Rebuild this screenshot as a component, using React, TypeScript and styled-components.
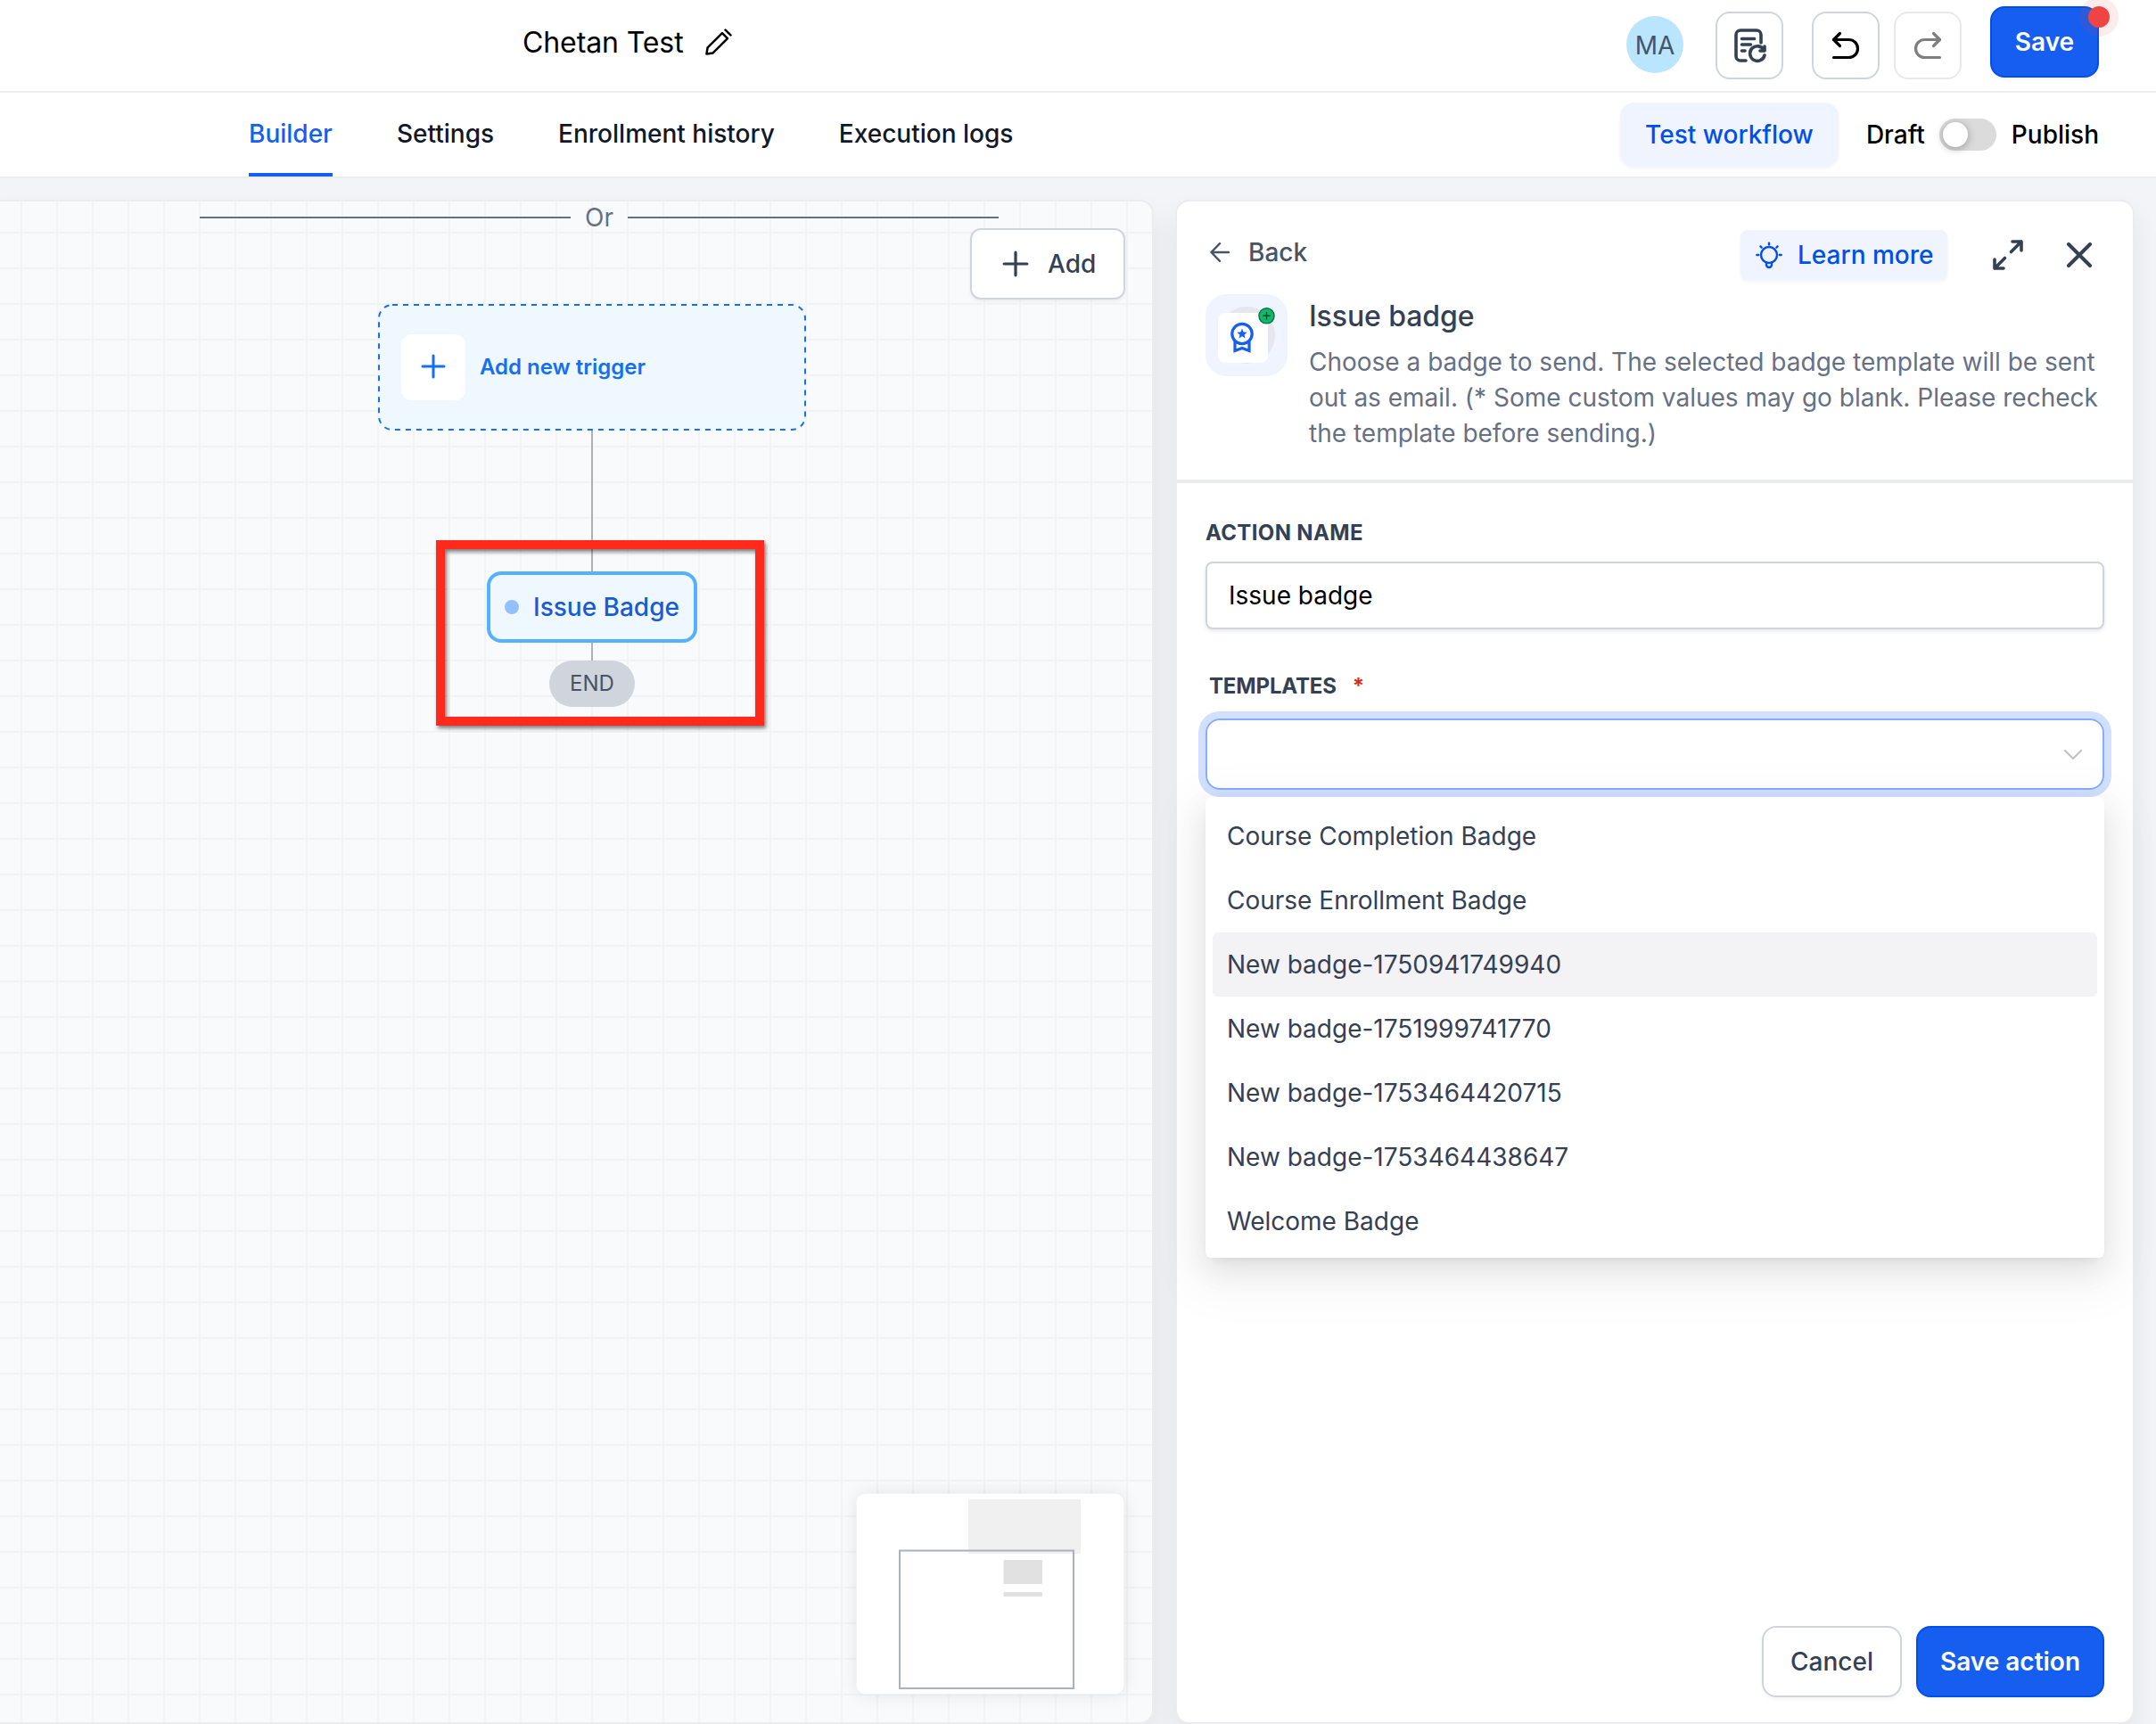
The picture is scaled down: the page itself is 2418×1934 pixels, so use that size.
import { FunctionComponent, ReactNode } from 'react';
import { createGlobalStyle, css, styled } from 'styled-components';

const color = {
  primary: '#155eef',
  primaryDark: '#004eeb',
  primarySoft: '#eff4ff',
  gray900: '#101828',
  gray700: '#344054',
  gray600: '#475467',
  gray500: '#667085',
  gray300: '#d0d5dd',
  gray200: '#eaecf0',
  gray100: '#f2f4f7',
  canvas: '#f9fafc',
  skyBg: '#eff8ff',
};

const GlobalStyle = createGlobalStyle`
  * {
    box-sizing: border-box;
  }
  body {
    margin: 0;
    background: ${color.gray100};
    font-family: Inter, "Liberation Sans", sans-serif;
    font-size: 28px;
    color: #000;
  }
  button, input {
    font: inherit;
    color: inherit;
    margin: 0;
  }
  svg {
    display: block;
    flex: none;
  }
`;

const Page = styled.div`
  display: flex;
  flex-direction: column;
  width: 2418px;
  height: 1934px;
  overflow: hidden;
`;

/* Header */
const Header = styled.header`
  display: flex;
  align-items: flex-start;
  flex: none;
  height: 104px;
  padding: 0 64px 0 586px;
  background: #fff;
  border-bottom: 2px solid ${color.gray200};
`;
const WorkflowName = styled.h1`
  display: flex;
  align-items: center;
  gap: 23px;
  height: 94px;
  margin: 0 auto 0 0;
  font-size: 32px;
  font-weight: 400;
  letter-spacing: -0.1px;
`;
const Avatar = styled.div`
  width: 64px;
  height: 64px;
  margin: 18px 36px 0 0;
  border-radius: 50%;
  background: #b9e6fe;
  color: ${color.gray600};
  line-height: 66px;
  text-align: center;
`;
const IconButton = styled.button<{
  $gap: number;
  $muted?: boolean;
  $tint?: string;
}>`
  display: flex;
  align-items: center;
  justify-content: center;
  width: 76px;
  height: 76px;
  padding: 0;
  margin: 13px ${({ $gap }) => $gap}px 0 0;
  background: #fff;
  border: 2px solid ${color.gray300};
  border-radius: 16px;
  color: ${({ $tint = '#000' }) => $tint};
  opacity: ${({ $muted }) => ($muted ? 0.5 : 1)};
`;
const SaveWrap = styled.div`
  position: relative;
  margin-top: 7px;
`;
const UnsavedDot = styled.span`
  position: absolute;
  top: 0;
  right: -12px;
  width: 24px;
  height: 24px;
  border-radius: 50%;
  background: #ef4444;
  box-shadow: 0 0 0 10px rgba(239, 68, 68, 0.1);
`;

const Button = styled.button<{ $primary?: boolean; $width: number }>`
  width: ${({ $width }) => $width}px;
  height: 80px;
  padding: 0;
  border-radius: 16px;
  font-weight: 500;
  box-shadow: 0 2px 4px rgba(16, 24, 40, 0.05);
  ${({ $primary }) =>
    $primary
      ? css`
          background: ${color.primary};
          border: 2px solid ${color.primaryDark};
          color: #fff;
          font-weight: 600;
        `
      : css`
          background: #fff;
          border: 2px solid ${color.gray300};
          color: ${color.gray700};
        `}
`;

/* Tabs */
const TabBar = styled.nav`
  display: flex;
  flex: none;
  gap: 72px;
  height: 96px;
  padding: 0 64px 0 279px;
  background: #fff;
  border-bottom: 2px solid ${color.gray200};
`;
const Tab = styled.a<{ $active?: boolean }>`
  height: 94px;
  padding-top: 1px;
  line-height: 90px;
  font-weight: 500;
  color: ${({ $active }) => ($active ? color.primary : color.gray900)};
  border-bottom: 4px solid
    ${({ $active }) => ($active ? color.primary : 'transparent')};
`;
const PublishArea = styled.div`
  display: flex;
  align-items: center;
  margin-left: auto;
  font-weight: 500;
`;
const TestButton = styled.button`
  width: 245px;
  height: 72px;
  margin-right: 31px;
  padding: 0;
  border: 0;
  border-radius: 16px;
  background: ${color.primarySoft};
  box-shadow: 0 2px 4px rgba(16, 24, 40, 0.05);
  color: ${color.primaryDark};
`;
const Toggle = styled.span`
  width: 64px;
  height: 36px;
  margin: 0 17px 0 16px;
  padding: 4px;
  border-radius: 18px;
  background: #dbdbdb;

  &::before {
    content: '';
    display: block;
    width: 28px;
    height: 28px;
    border-radius: 50%;
    background: #fff;
    box-shadow: 0 2px 8px 1px rgba(0, 0, 0, 0.25);
  }
`;

/* Workspace */
const Workspace = styled.main`
  display: flex;
  flex: 1;
  gap: 24px;
  padding: 24px 24px 0 0;
`;
const panelShadow = '0 16px 32px rgba(16, 24, 40, 0.07)';

/* Nodes sit on a free canvas, so they are placed by coordinates */
const Canvas = styled.section`
  position: relative;
  flex: none;
  width: 1294px;
  border: 2px solid ${color.gray200};
  border-left: 0;
  border-radius: 0 16px 16px 0;
  overflow: hidden;
  background-color: ${color.canvas};
  background-image: linear-gradient(#f2f3f5 2px, transparent 2px),
    linear-gradient(90deg, #f2f3f5 2px, transparent 2px);
  background-size: 40px 40px;
  background-position: 23px 34px;
`;
const CanvasFrame = styled.div`
  display: flex;
  border-radius: 0 16px 16px 0;
  box-shadow: ${panelShadow};
`;
const OrDivider = styled.div`
  position: absolute;
  top: -2px;
  left: 224px;
  display: flex;
  align-items: center;
  width: 896px;
  height: 40px;
  color: ${color.gray500};

  &::before,
  &::after {
    content: '';
    flex: 1;
    height: 2px;
    background: ${color.gray500};
  }
  span {
    width: 64px;
    text-align: center;
  }
`;
const Connector = styled.div<{ $top: number; $height: number }>`
  position: absolute;
  left: 663px;
  top: ${({ $top }) => $top}px;
  width: 2px;
  height: ${({ $height }) => $height}px;
  background: #b0b1b6;
`;
const TriggerNode = styled.div`
  position: absolute;
  top: 115px;
  left: 424px;
  width: 480px;
  height: 142px;
  color: #1570ef;
  font-size: 24px;
  font-weight: 600;

  > svg {
    position: absolute;
    inset: 0;
  }
`;
const TriggerContent = styled.div`
  position: relative;
  display: flex;
  align-items: center;
  gap: 16px;
  height: 100%;
  padding-left: 26px;

  span {
    padding-bottom: 2px;
  }
`;
const TriggerIcon = styled.div`
  display: flex;
  align-items: center;
  justify-content: center;
  width: 72px;
  height: 74px;
  padding-bottom: 2px;
  border-radius: 12px;
  background: #fff;
`;
const ActionNode = styled.div`
  position: absolute;
  top: 415px;
  left: 546px;
  display: flex;
  align-items: center;
  gap: 16px;
  width: 236px;
  height: 80px;
  padding-left: 16px;
  border: 4px solid #53b1fd;
  border-radius: 16px;
  background: ${color.skyBg};
  color: #175cd3;
  font-weight: 500;
  white-space: nowrap;

  &::before {
    content: '';
    width: 16px;
    height: 16px;
    border-radius: 50%;
    background: #93c0ff;
  }
`;
const EndNode = styled.div`
  position: absolute;
  top: 515px;
  left: 616px;
  width: 96px;
  height: 52px;
  border-radius: 26px;
  background: ${color.gray300};
  color: ${color.gray600};
  font-size: 24px;
  line-height: 52px;
  text-align: center;
`;
const Highlight = styled.div`
  position: absolute;
  top: 380px;
  left: 489px;
  width: 368px;
  height: 208px;
  border: 10px solid #ff2a1b;
  filter: drop-shadow(2px 3px 2px rgba(0, 0, 0, 0.5));
`;
const AddButton = styled.button`
  position: absolute;
  top: 30px;
  right: 30px;
  display: flex;
  align-items: center;
  gap: 21px;
  width: 174px;
  height: 80px;
  padding: 0 0 0 34px;
  border: 2px solid ${color.gray300};
  border-radius: 12px;
  background: #fff;
  box-shadow: 0 2px 4px rgba(16, 24, 40, 0.06);
  color: ${color.gray700};
  font-weight: 500;
`;
const MiniMap = styled.div`
  position: absolute;
  left: 960px;
  top: 1449px;
  width: 301px;
  height: 226px;
  border: 1px solid #f3f4f5;
  border-radius: 10px;
  background: #fff;
  box-shadow: 0 0 20px rgba(0, 0, 0, 0.09);
`;

/* Side panel */
const Panel = styled.aside`
  display: flex;
  flex-direction: column;
  flex: 1;
  border: 2px solid ${color.gray200};
  border-radius: 16px;
  background: #fff;
  box-shadow: ${panelShadow};
`;
const PanelHead = styled.div`
  flex: none;
  height: 316px;
  padding: 32px 32px 0;
  border-bottom: 4px solid ${color.gray200};
`;
const PanelBar = styled.div`
  display: flex;
  align-items: center;
  height: 56px;
  padding-right: 14px;
  color: ${color.gray700};
`;
const Back = styled.a`
  display: flex;
  align-items: center;
  gap: 21px;
  margin: -6px auto 0 5px;
  color: ${color.gray600};
  font-weight: 500;
`;
const LearnMore = styled.a`
  display: flex;
  align-items: center;
  gap: 16px;
  width: 232px;
  height: 56px;
  padding-left: 16px;
  border-radius: 8px;
  background: ${color.primarySoft};
  box-shadow: 0 2px 4px rgba(16, 24, 40, 0.05);
  color: ${color.primaryDark};
  font-weight: 500;
  white-space: nowrap;
`;
const PanelTools = styled.div`
  display: flex;
  align-items: center;
  gap: 48px;
  margin-left: 50px;
`;
const ActionInfo = styled.div`
  display: flex;
  gap: 24px;
  margin-top: 16px;
`;
const ActionTitle = styled.h2`
  margin: 0 0 6px;
  color: ${color.gray700};
  font-size: 32px;
  font-weight: 500;
  letter-spacing: -0.1px;
  line-height: 50px;
`;
const ActionText = styled.p`
  margin: 0 -20px 0 0;
  color: ${color.gray500};
  line-height: 40px;
  white-space: pre-line;
`;
const Form = styled.div`
  flex: 1;
  padding: 41px 32px 0;
`;
const Label = styled.label<{ $indent?: number; $spacing: number }>`
  display: block;
  padding-left: ${({ $indent = 0 }) => $indent}px;
  color: ${color.gray700};
  font-size: 24px;
  font-weight: 700;
  letter-spacing: ${({ $spacing }) => $spacing}px;
  line-height: 30px;

  span {
    margin-left: 18px;
    color: #d92d20;
  }
`;
const TextInput = styled.input`
  display: block;
  width: 100%;
  height: 76px;
  margin: 17px 0 49px;
  padding: 0 24px;
  border: 2px solid ${color.gray300};
  border-radius: 8px;
  background: #fff;
  box-shadow: 0 2px 4px rgba(16, 24, 40, 0.1);
  color: #000;
`;
const SelectWrap = styled.div`
  position: relative;
  margin-top: 21px;
`;
const SelectBox = styled.div`
  display: flex;
  align-items: center;
  justify-content: flex-end;
  height: 80px;
  padding-right: 21px;
  border: 2px solid #84adff;
  border-radius: 16px;
  box-shadow: 0 0 0 8px #d1e0ff;
`;
const Menu = styled.ul`
  position: absolute;
  top: 88px;
  left: 0;
  right: 0;
  height: 517px;
  margin: 0;
  padding: 8px;
  border-radius: 6px;
  background: #fff;
  box-shadow: 0 6px 12px -8px rgba(0, 0, 0, 0.12),
    0 12px 32px rgba(0, 0, 0, 0.08), 0 18px 56px 16px rgba(0, 0, 0, 0.05);
  list-style: none;
`;
const MenuItem = styled.li<{ $hover?: boolean }>`
  height: 72px;
  padding-left: 16px;
  border-radius: 6px;
  background: ${({ $hover }) => ($hover ? '#f3f3f5' : 'transparent')};
  color: ${color.gray700};
  line-height: 72px;
`;
const PanelFooter = styled.div`
  display: flex;
  justify-content: flex-end;
  gap: 16px;
  padding: 0 32px 28px;
`;

const Icon: FunctionComponent<{
  size: number;
  stroke?: number;
  box?: number;
  children: ReactNode;
}> = ({ size, stroke = 2, box = 24, children }) => (
  <svg
    width={size}
    height={size}
    viewBox={`0 0 ${box} ${box}`}
    fill="none"
    stroke="currentColor"
    strokeWidth={stroke}
    strokeLinecap="round"
    strokeLinejoin="round"
  >
    {children}
  </svg>
);

const PencilIcon = () => (
  <Icon size={31} box={32} stroke={2.6}>
    <path d="M2.5 29.5l1.200-7.400L20.600 5.200l6.200 6.200L9.900 28.300l-7.400 1.200z" />
    <path d="M24.300 1.600l6.100 6.100" />
  </Icon>
);

const LogIcon = () => (
  <Icon size={40} box={40} stroke={3.6}>
    <path d="M16 37H10a5 5 0 0 1-5-5V8a5 5 0 0 1 5-5h18a5 5 0 0 1 5 5v9" />
    <path d="M11.5 12.5h14M11.5 19h10M11.5 26h3.5" />
    <path d="M36.4 25.4a8.3 8.3 0 1 0 .6 5.6" />
    <path d="M37 21v5h-5" />
  </Icon>
);

const UndoIcon = () => (
  <Icon size={34} box={34} stroke={3.2}>
    <path d="M10.500 3.500L3.500 10.500l7 7" />
    <path d="M3.500 10.500h17a10 10 0 0 1 0 20h-17" />
  </Icon>
);

const RedoIcon = () => (
  <Icon size={34} box={34} stroke={3.2}>
    <path d="M23.500 3.500l7 7-7 7" />
    <path d="M30.500 10.500h-17a10 10 0 0 0 0 20h17" />
  </Icon>
);

const PlusIcon = ({ size }: { size: number }) => (
  <Icon size={size} box={28} stroke={3}>
    <path d="M14 2v24M2 14h24" />
  </Icon>
);

const BulbIcon = () => (
  <Icon size={32} box={32} stroke={2.4}>
    <circle cx="16" cy="16" r="9" />
    <path d="M13 24.500v2.500a3 3 0 0 0 6 0v-2.500" />
    <path d="M16 2.600v1.800M2.400 16h1.800M27.800 16h1.800M6.400 6.400l1.200 1.200M25.600 6.400l-1.200 1.200" />
  </Icon>
);

const BackIcon = () => (
  <Icon size={22} box={22} stroke={2.4}>
    <path d="M21 11H1.500M11 1.200L1.500 11l9.500 9.800" />
  </Icon>
);

const ExpandIcon = () => (
  <Icon size={36} box={36} stroke={3.6}>
    <path d="M21.500 14.500L33 3M23 3h10v10M14.500 21.500L3 33M3 23v10h10" />
  </Icon>
);

const CloseIcon = () => (
  <Icon size={28} box={28} stroke={4}>
    <path d="M2 2l24 24M26 2L2 26" />
  </Icon>
);

const BadgeArt = () => (
  <svg width="92" height="92" viewBox="0 0 92 92" fill="none">
    <rect width="92" height="92" rx="24" fill="#eff4ff" />
    <circle cx="46" cy="46" r="32" fill="#e4e7f0" />
    <rect x="14" y="21" width="56" height="56" rx="8" fill="#fff" />
    <path d="M33 53v10.500l8-3 8 3V53" stroke="#155eef" strokeWidth="3.2" />
    <circle
      cx="41"
      cy="44.500"
      r="11.200"
      fill="#fff"
      stroke="#155eef"
      strokeWidth="3.2"
    />
    <path
      d="M41 38.600l1.600 4 4.200.2-3.300 2.700 1.100 4.100-3.600-2.300-3.600 2.300 1.100-4.100-3.300-2.700 4.200-.2z"
      fill="#155eef"
    />
    <circle
      cx="68.500"
      cy="24.300"
      r="8.600"
      fill="#12b76a"
      stroke="#067647"
      strokeWidth="1.4"
    />
    <path d="M68.500 20v8.600M64.200 24.300h8.600" stroke="#054f31" strokeWidth="1.4" />
  </svg>
);

const tabs = ['Builder', 'Settings', 'Enrollment history', 'Execution logs'];

const templates = [
  'Course Completion Badge',
  'Course Enrollment Badge',
  'New badge-1750941749940',
  'New badge-1751999741770',
  'New badge-1753464420715',
  'New badge-1753464438647',
  'Welcome Badge',
];

const TopBar = () => (
  <>
    <Header>
      <WorkflowName>
        Chetan Test
        <PencilIcon />
      </WorkflowName>
      <Avatar>MA</Avatar>
      <IconButton $gap={32} $tint={color.gray700}>
        <LogIcon />
      </IconButton>
      <IconButton $gap={16}>
        <UndoIcon />
      </IconButton>
      <IconButton $gap={32} $muted>
        <RedoIcon />
      </IconButton>
      <SaveWrap>
        <Button $primary $width={122}>
          Save
        </Button>
        <UnsavedDot />
      </SaveWrap>
    </Header>
    <TabBar>
      {tabs.map((tab, i) => (
        <Tab key={tab} $active={i === 0}>
          {tab}
        </Tab>
      ))}
      <PublishArea>
        <TestButton>Test workflow</TestButton>
        Draft
        <Toggle />
        Publish
      </PublishArea>
    </TabBar>
  </>
);

const WorkflowCanvas = () => (
  <CanvasFrame>
    <Canvas>
      <OrDivider>
        <span>Or</span>
      </OrDivider>
      <Connector $top={257} $height={158} />
      <Connector $top={495} $height={20} />
      <TriggerNode>
        <svg width="480" height="142">
          <rect
            x="1"
            y="1"
            width="478"
            height="140"
            rx="15"
            fill={color.skyBg}
            stroke="#1570ef"
            strokeWidth="2"
            strokeDasharray="6 6"
          />
        </svg>
        <TriggerContent>
          <TriggerIcon>
            <PlusIcon size={28} />
          </TriggerIcon>
          <span>Add new trigger</span>
        </TriggerContent>
      </TriggerNode>
      <ActionNode>Issue Badge</ActionNode>
      <EndNode>END</EndNode>
      <Highlight />
      <AddButton>
        <PlusIcon size={30} />
        Add
      </AddButton>
      <MiniMap>
        <svg width="299" height="224">
          <rect x="125" y="6" width="126" height="61" fill="#f0f0f0" />
          <rect x="164.500" y="74" width="43.500" height="27" rx="1" fill="#e1e1e1" />
          <rect x="164.500" y="110" width="43.500" height="5" rx="1" fill="#e1e1e1" />
          <rect
            x="48"
            y="63.500"
            width="195"
            height="154.500"
            fill="none"
            stroke="#a7b1c2"
            strokeWidth="2"
          />
        </svg>
      </MiniMap>
    </Canvas>
  </CanvasFrame>
);

const ActionPanel = () => (
  <Panel>
    <PanelHead>
      <PanelBar>
        <Back>
          <BackIcon />
          Back
        </Back>
        <LearnMore>
          <BulbIcon />
          Learn more
        </LearnMore>
        <PanelTools>
          <ExpandIcon />
          <CloseIcon />
        </PanelTools>
      </PanelBar>
      <ActionInfo>
        <BadgeArt />
        <div>
          <ActionTitle>Issue badge</ActionTitle>
          <ActionText>
            {`Choose a badge to send. The selected badge template will be sent
            out as email. (* Some custom values may go blank. Please recheck
            the template before sending.)`}
          </ActionText>
        </div>
      </ActionInfo>
    </PanelHead>
    <Form>
      <Label $spacing={0.35}>ACTION NAME</Label>
      <TextInput defaultValue="Issue badge" />
      <Label $indent={4} $spacing={-0.15}>
        TEMPLATES<span>*</span>
      </Label>
      <SelectWrap>
        <SelectBox>
          <Icon size={24} stroke={2.2}>
            <path d="M3 8l9 9 9-9" stroke="#c2c2c2" />
          </Icon>
        </SelectBox>
        <Menu>
          {templates.map((name, i) => (
            <MenuItem key={name} $hover={i === 2}>
              {name}
            </MenuItem>
          ))}
        </Menu>
      </SelectWrap>
    </Form>
    <PanelFooter>
      <Button $width={157}>Cancel</Button>
      <Button $primary $width={211}>
        Save action
      </Button>
    </PanelFooter>
  </Panel>
);

const App: FunctionComponent = () => {
  return (
    <Page>
      <GlobalStyle />
      <TopBar />
      <Workspace>
        <WorkflowCanvas />
        <ActionPanel />
      </Workspace>
    </Page>
  );
};

export default App;
